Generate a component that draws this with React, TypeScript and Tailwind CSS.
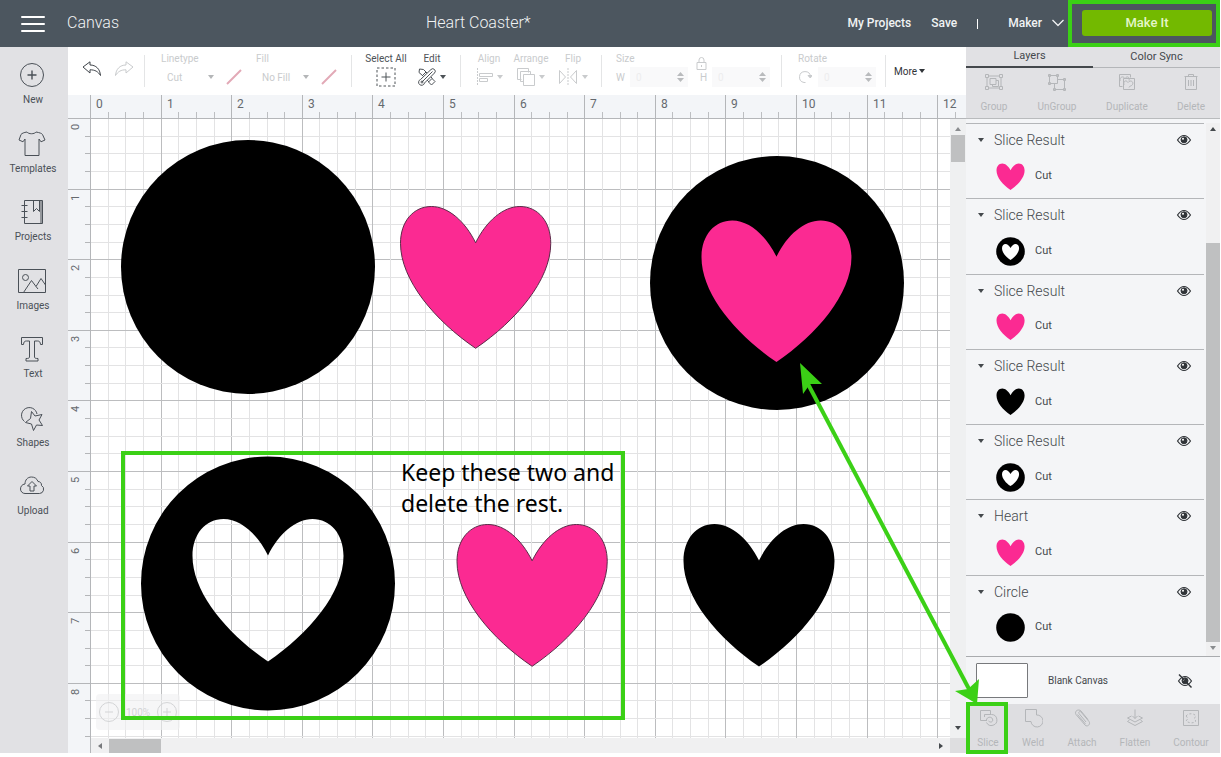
import type { ReactNode } from "react";

const UNIT = 70.6;
const HEART =
  "M75.5 36.5C65 15 48 0 31 0C13 0 0 15 0 37C0 74 35 115 75.5 142.5C116 115 151 74 151 37C151 15 138 0 120 0C103 0 86 15 75.5 36.5Z";
const PINK = "#fb2a92";

type IconProps = { className?: string; w?: number; h?: number; children: ReactNode };

function Icon({ className = "", w = 24, h = 24, children }: IconProps) {
  return (
    <svg
      width={w}
      height={h}
      viewBox={`0 0 ${w} ${h}`}
      fill="none"
      stroke="currentColor"
      strokeWidth="1"
      strokeLinejoin="round"
      className={`shrink-0 ${className}`}
      aria-hidden="true"
    >
      {children}
    </svg>
  );
}

function Caret({ className = "" }: { className?: string }) {
  return (
    <svg width="6" height="4" viewBox="0 0 6 4" className={`shrink-0 ${className}`} aria-hidden="true">
      <path d="M0 0h6L3 4z" fill="currentColor" />
    </svg>
  );
}

const tools = [
  {
    name: "New",
    icon: (
      <Icon w={28} h={28}>
        <circle cx="14" cy="14" r="11.5" />
        <path d="M14 9.5v9M9.5 14h9" strokeWidth="1.4" />
      </Icon>
    ),
  },
  {
    name: "Templates",
    icon: (
      <Icon w={28} h={28}>
        <path d="M9 2c1.5 2.3 7.5 2.3 9 0c3.500.6 6 1.500 6.500 2.500l2.500 5.500l-4 1.800l-2-2.800v16.500H7V9l-2 2.800l-4-1.800L3 4.500C3.800 3.300 6 2.500 9 2z" />
      </Icon>
    ),
  },
  {
    name: "Projects",
    icon: (
      <Icon w={28} h={28}>
        <path d="M6.500 2.500h18v23h-18zM15.500 2.500v11l3-3l3 3v-11M23 2.500v23M3.500 7.500h6M3.500 13.500h6M3.500 19.500h6" />
      </Icon>
    ),
  },
  {
    name: "Images",
    icon: (
      <Icon w={28} h={28}>
        <path d="M.5 2.500h27v23H.5zM5.500 25.500l8-12l4.500 6l5-8l4.500 6.500M18 19.500l2 2.500" />
        <circle cx="7.500" cy="10.500" r="3" />
      </Icon>
    ),
  },
  {
    name: "Text",
    icon: (
      <Icon w={28} h={28}>
        <path d="M3.500 2.500h21v7h-2c-.2-2.500-1-3.500-3-3.500h-3v16c0 1 .8 1.500 3.500 1.500v2.500h-12v-2.500c2.700 0 3.500-.5 3.500-1.500V6h-3c-2 0-2.800 1-3 3.500h-2z" />
      </Icon>
    ),
  },
  {
    name: "Shapes",
    icon: (
      <Icon w={28} h={28}>
        <path d="M6.500 17.500a7.800 7.800 0 1 1 12.500-7.500" />
        <path d="M13.500 7.500l3.500 4.500l7-1.500l-3 5.500l3.500 5.500l-6-.5l-3 5.500l-2-6.500l-6-1.500l5-4z" />
      </Icon>
    ),
  },
  {
    name: "Upload",
    icon: (
      <Icon w={28} h={28}>
        <path d="M7 21.500h14.500a4.300 4.300 0 0 0 2-8c.3-2.500-1.500-4-3.500-4C19 6.500 16.500 5 13.500 5C9.500 5 7 8 7 12c-3 .3-4.500 2.500-4.500 5s2 4.500 4.500 4.500z" />
        <path d="M14 9.500l-4.500 4.500H12v5h4v-5h2.500z" />
      </Icon>
    ),
  },
];

function Header() {
  return (
    <header className="flex h-[47px] shrink-0 items-center bg-[#4c565f] text-[#f1f3f4]">
      <button type="button" aria-label="Menu" className="ml-[21px] flex h-6 w-6 flex-col justify-between py-1">
        <span className="h-0.5 rounded-full bg-white" />
        <span className="h-0.5 rounded-full bg-white" />
        <span className="h-0.5 rounded-full bg-white" />
      </button>
      <h1 className="ml-[22px] w-[359px] shrink-0 pb-0.5 text-base font-light">Canvas</h1>
      <p className="flex-1 pb-0.5 text-base font-light">Heart Coaster*</p>
      <a href="#projects" className="mr-5 pb-0.5 text-xs font-medium">My Projects</a>
      <button type="button" className="mr-5 pb-0.5 text-xs font-medium">Save</button>
      <span className="mr-[30px] h-2.5 w-px bg-white" />
      <button type="button" className="mr-1 flex items-center gap-2.5 pb-0.5 text-xs font-medium">
        Maker
        <Icon w={12} h={8}>
          <path d="M.5 1l5.500 5.500L11.500 1" strokeWidth="1.300" />
        </Icon>
      </button>
      <div className="flex h-full w-[152px] items-center justify-end border-4 border-[#3bd016] pr-1">
        <button type="button" className="mb-0.5 h-[26px] w-[130px] rounded-[3px] bg-[#73b900] text-[13px] font-medium text-[#e4f6c9]">
          Make It
        </button>
      </div>
    </header>
  );
}

function Sidebar() {
  return (
    <nav className="flex w-[68px] shrink-0 flex-col bg-[#e1e1e4] pb-[226px] text-[#4a5057]">
      {tools.map((t) => (
        <button key={t.name} type="button" className="flex flex-1 flex-col items-center gap-1 pt-3.5 pr-1">
          {t.icon}
          <span className="pl-0.5 text-[10px] leading-3.5">{t.name}</span>
        </button>
      ))}
    </nav>
  );
}

function Divider() {
  return <span className="h-8 w-px shrink-0 bg-[#e4e5e6]" />;
}

function Slash() {
  return (
    <Icon w={16} h={16} className="text-[#e2a9b6]">
      <path d="M1 15L15 1" strokeWidth="2" />
    </Icon>
  );
}

function PickBox({ id, label, value }: { id: string; label: string; value: string }) {
  return (
    <div className="w-[95px] shrink-0">
      <label htmlFor={id} className="block text-[10px] leading-3">{label}</label>
      <div className="flex h-6 items-center">
        <select id={id} className="w-[43px] appearance-none bg-transparent pl-1.5 text-[10px] outline-none">
          <option>{value}</option>
        </select>
        <Caret className="ml-1 mr-3 text-[#b4b6b8]" />
        <Slash />
      </div>
    </div>
  );
}

function ToolButton({ label, className, children }: { label: string; className: string; children: ReactNode }) {
  return (
    <button type="button" className={`flex shrink-0 flex-col items-center ${className}`}>
      <span className="text-[10px] leading-3">{label}</span>
      <span className="flex h-6 items-center gap-1">{children}</span>
    </button>
  );
}

function NumberBox({ label }: { label: string }) {
  return (
    <span className="flex h-5 w-[58px] items-center justify-between bg-[#f9f9fa] pr-1">
      <input aria-label={label} defaultValue="0" className="w-8 bg-transparent pl-1.5 text-[10px] text-[#ededee] outline-none" />
      <svg width="7" height="10" viewBox="0 0 7 10" aria-hidden="true">
        <path d="M0 4L3.500 0L7 4zM0 6h7L3.500 10z" fill="#b9bbbd" />
      </svg>
    </span>
  );
}

function Toolbar() {
  return (
    <div className="flex h-12 shrink-0 items-center overflow-hidden bg-white text-[#c9cbcd]">
      <div className="flex w-[76px] shrink-0 gap-3 pb-1 pl-3.5">
        <button type="button" aria-label="Undo" className="text-[#3f444a]">
          <Icon w={20} h={16}>
            <path d="M1 6L8 .8V4c6 0 10 4 10.500 10.500C16 10.500 13 8.800 8 8.800V12z" />
          </Icon>
        </button>
        <button type="button" aria-label="Redo">
          <Icon w={20} h={16}>
            <path d="M19 6L12 .8V4C6 4 2 8 1.500 14.500C4 10.500 7 8.800 12 8.800V12z" />
          </Icon>
        </button>
      </div>
      <Divider />
      <div className="flex pl-4">
        <PickBox id="linetype" label="Linetype" value="Cut" />
        <PickBox id="fill" label="Fill" value="No Fill" />
      </div>
      <Divider />
      <ToolButton label="Select All" className="ml-3 w-11 text-[#4d5257]">
        <Icon w={20} h={20}>
          <path d="M1 1h18v18H1z" strokeDasharray="2.500 2" />
          <path d="M10 5.500v9M5.500 10h9" />
        </Icon>
      </ToolButton>
      <ToolButton label="Edit" className="mr-3 ml-2 w-8 text-[#4d5257]">
        <Icon w={18} h={18}>
          <path d="M1.500 1l4 .5L8 4L4.500 7.500L1 4.500zM10.500 14L14 10.500L17 13.500L13.500 17z" />
          <path d="M4 7l7 7M8 4l6.500 6.500" />
          <path d="M13 1.500a2 2 0 0 1 3.500 3.500L6.500 15a3 3 0 1 1-4-3.500z" fill="white" />
          <path d="M4 14L14.500 3.500" />
          <circle cx="4" cy="14" r="1" />
        </Icon>
        <Caret />
      </ToolButton>
      <Divider />
      <ToolButton label="Align" className="ml-3 w-8">
        <Icon w={17} h={18}>
          <path d="M1.500 0v18" strokeDasharray="2 1" />
          <path d="M3.500 5.500h13v3h-13zM3.500 10.500h8v3h-8z" />
        </Icon>
        <Caret />
      </ToolButton>
      <ToolButton label="Arrange" className="ml-2 w-9">
        <Icon w={18} h={18}>
          <path d="M4.500 11.500h-4V.5h11v4M7 13.500H3.500v-10h10V7" />
          <path d="M6.500 6.500h11v11h-11z" />
        </Icon>
        <Caret />
      </ToolButton>
      <ToolButton label="Flip" className="mr-3 ml-2 w-8">
        <Icon w={20} h={18}>
          <path d="M1.500 2.500l6 6.500l-6 6.500zM18.500 2.500l-6 6.500l6 6.500z" />
          <path d="M10 0v18" strokeDasharray="2 1" />
        </Icon>
        <Caret />
      </ToolButton>
      <Divider />
      <div className="w-[179px] shrink-0 pl-3.5">
        <div className="flex h-3 items-center text-[10px] leading-3">
          <span className="w-20">Size</span>
          <button type="button" aria-label="Lock proportions" className="pt-2">
            <Icon w={11} h={13}>
              <path d="M1 5.500h9v7H1zM3 5.500V3a2.500 2.500 0 0 1 5 0v2.500M5.500 8v2" />
            </Icon>
          </button>
        </div>
        <div className="flex h-6 items-center text-[10px]">
          <span className="w-3.5">W</span>
          <NumberBox label="Width" />
          <span className="ml-3 w-3">H</span>
          <NumberBox label="Height" />
        </div>
      </div>
      <Divider />
      <div className="ml-4 w-[87px] shrink-0">
        <span className="block text-[10px] leading-3">Rotate</span>
        <div className="flex h-6 items-center gap-1.5">
          <Icon w={14} h={14}>
            <path d="M7.500 12.500H6a5.500 5.500 0 1 1 6.500-6" />
            <path d="M10 5.500h4L12.300 8z" fill="currentColor" />
          </Icon>
          <NumberBox label="Rotate" />
        </div>
      </div>
      <Divider />
      <button type="button" className="ml-2 flex items-center gap-0.5 text-[10px] text-[#303438]">
        More
        <Caret />
      </button>
    </div>
  );
}

const ticks = Array.from({ length: 60 }, (_, i) => i);

function TopRuler() {
  return (
    <svg className="block h-6 w-full bg-[#f3f5f8]" aria-hidden="true">
      {ticks.map((i) => (
        <path
          key={i}
          d={`M${Math.round((i * UNIT) / 4) + 22.5} ${i % 4 ? 17 : 0}V24`}
          stroke={i % 4 ? "#bcbec1" : "#b4b6b9"}
        />
      ))}
      {ticks.slice(0, 13).map((n) => (
        <text key={n} x={Math.round(n * UNIT) + 28} y="13" fontSize="12" fill="#65696e">
          {n}
        </text>
      ))}
      <path d="M0 23.500H3000" stroke="#b4b6b9" />
    </svg>
  );
}

function SideRuler() {
  return (
    <svg className="block w-[23px] shrink-0 bg-[#f3f5f8]" aria-hidden="true">
      {ticks.map((i) => (
        <path key={i} d={`M${i % 4 ? 17 : 0} ${Math.round((i * UNIT) / 4) - 0.5}H23`} stroke="#b4b6b9" />
      ))}
      {ticks.slice(0, 9).map((n) => (
        <text
          key={n}
          transform={`translate(11 ${Math.round(n * UNIT) + 11}) rotate(-90)`}
          fontSize="11"
          fill="#65696e"
        >
          {n}
        </text>
      ))}
      <path d="M22.500 0V2000" stroke="#b4b6b9" />
    </svg>
  );
}

function Artboard() {
  return (
    <svg className="block h-full w-full bg-white" role="img" aria-label="Heart coaster design">
      {ticks.map((i) => {
        const p = Math.round((i * UNIT) / 4) - 0.5;
        return <path key={i} d={`M${p} 0V2000M0 ${p}H3000`} stroke={i % 4 ? "#e3e3e4" : "#bcbdbf"} />;
      })}
      <circle cx="157" cy="148" r="127" />
      <path d={HEART} transform="translate(309.500 87.500) scale(.995)" fill={PINK} stroke="#5a2a48" />
      <circle cx="686" cy="164" r="127" />
      <path d={HEART} transform="translate(610.500 101.500) scale(.993)" fill={PINK} />
      {/* coaster ring with the heart cut out of it */}
      <path
        d={`M-51.500 64.500a127 127 0 1 0 254 0a127 127 0 1 0 -254 0Z${HEART}`}
        fillRule="evenodd"
        transform="translate(101.500 400)"
      />
      <path d={HEART} transform="translate(366 405.500) scale(.995)" fill={PINK} stroke="#5a2a48" />
      <path d={HEART} transform="translate(592.500 405)" />
    </svg>
  );
}

function Workspace() {
  return (
    <main className="flex min-w-0 flex-1 flex-col">
      <Toolbar />
      <TopRuler />
      <div className="flex min-h-0 flex-1">
        <SideRuler />
        <div className="flex min-w-0 flex-1 flex-col">
          <div className="flex min-h-0 flex-1">
            <div className="relative min-w-0 flex-1 overflow-hidden">
              <Artboard />
              <div className="absolute bottom-2 left-[5px] flex h-9 w-[84px] items-center justify-between rounded-sm bg-[#f0f0f1]/60 px-[3px] text-[10px] text-[#d3d4d6]">
                <button type="button" aria-label="Zoom out">
                  <Icon w={20} h={20}>
                    <circle cx="10" cy="10" r="9.500" />
                    <path d="M6 10h8" />
                  </Icon>
                </button>
                <span>100%</span>
                <button type="button" aria-label="Zoom in">
                  <Icon w={20} h={20}>
                    <circle cx="10" cy="10" r="9.500" />
                    <path d="M6 10h8M10 6v8" />
                  </Icon>
                </button>
              </div>
              <p className="absolute top-[332px] left-[30px] h-[269px] w-[504px] border-4 border-[#3bd016] pt-0.5 pl-[276px] font-['Noto_Sans',sans-serif] text-[23px] leading-[31px] whitespace-nowrap text-black">
                Keep these two and
                <br />
                delete the rest.
              </p>
            </div>
            <div className="flex w-4 flex-col items-center bg-[#eff0f1] pt-2 pb-2 text-[#8a8c8f]">
              <Caret className="rotate-180" />
              <span className="mt-1 h-[27px] w-3.5 bg-[#bfc0c1]" />
              <Caret className="mt-auto text-[#44484c]" />
            </div>
          </div>
          <div className="flex h-[15px] shrink-0 items-center bg-[#f0f0f1]">
            <Caret className="ml-1.5 rotate-90 text-[#77797c]" />
            <span className="ml-1.5 h-3.5 w-[52px] bg-[#bfc0c1]" />
            <Caret className="mr-1.5 ml-auto -rotate-90 text-[#44484c]" />
            <span className="h-full w-4 bg-[#dedee0]" />
          </div>
        </div>
      </div>
    </main>
  );
}

type Thumb = "pink" | "black" | "ring" | "circle";

const layers: { name: string; thumb: Thumb }[] = [
  { name: "Slice Result", thumb: "pink" },
  { name: "Slice Result", thumb: "ring" },
  { name: "Slice Result", thumb: "pink" },
  { name: "Slice Result", thumb: "black" },
  { name: "Slice Result", thumb: "ring" },
  { name: "Heart", thumb: "pink" },
  { name: "Circle", thumb: "circle" },
];

function LayerThumb({ thumb }: { thumb: Thumb }) {
  const round = thumb === "ring" || thumb === "circle";
  return (
    <svg width="29" height="29" viewBox="0 0 29 29" aria-hidden="true">
      {round && <circle cx="14.500" cy="14.500" r="14.300" />}
      {thumb === "ring" && <path d={HEART} fill="white" transform="translate(6 7) scale(.113)" />}
      {!round && (
        <path d={HEART} fill={thumb === "pink" ? PINK : "black"} transform="translate(.5 1.500) scale(.186)" />
      )}
    </svg>
  );
}

function Eye({ off = false }: { off?: boolean }) {
  return (
    <Icon w={16} h={14} className="text-[#303438]">
      <path d="M1.500 7C4 3.300 6 2.500 8 2.500S12 3.300 14.500 7C12 10.700 10 11.500 8 11.500S4 10.700 1.500 7z" strokeWidth="1.200" />
      <circle cx="8" cy="6.800" r="3" fill="currentColor" />
      <circle cx="7" cy="5.700" r="1" fill="white" stroke="none" />
      {off && <path d="M2 .5L14.500 13.500" strokeWidth="1.400" />}
    </Icon>
  );
}

function PanelButton({ label, className, children }: { label: string; className: string; children: ReactNode }) {
  return (
    <button type="button" className={`flex shrink-0 flex-col items-center text-[10px] leading-3.5 ${className}`}>
      <Icon w={20} h={20}>{children}</Icon>
      {label}
    </button>
  );
}

function LayersPanel() {
  return (
    <aside className="flex w-[254px] shrink-0 flex-col bg-[#f4f5f7] text-[#44484c]">
      <div className="flex h-[21px] shrink-0 bg-[#e1e1e4] text-[11px]">
        <button type="button" className="flex-1 border-b-2 border-[#44484c]">Layers</button>
        <button type="button" className="flex-1 border-b border-[#b4b6b9]">Color Sync</button>
      </div>
      <div className="flex h-[51px] shrink-0 items-start border-b border-[#b9bbbd] bg-[#e1e1e4] pt-1 text-[#b4b6b9]">
        <PanelButton label="Group" className="w-14 gap-2">
          <path d="M1.500 2.500h3v3h-3zM15.500 2.500h3v3h-3zM1.500 14.500h3v3h-3zM15.500 14.500h3v3h-3zM4.500 4h11M4.500 16h11M3 5.500v9M17 5.500v9M6 6.500h6v6H6z" />
          <path d="M8.500 12.500v2h6v-6H12" />
        </PanelButton>
        <PanelButton label="UnGroup" className="w-[70px] gap-2">
          <path d="M2.500 3.500h8v8h-8zM1.500 2.500h2v2h-2zM9.500 2.500h2v2h-2zM1.500 10.500h2v2h-2z" />
          <path d="M7.500 11.500v6h10v-10h-7M6.500 16.500h2v2h-2zM16.500 16.500h2v2h-2zM16.500 6.500h2v2h-2z" />
        </PanelButton>
        <PanelButton label="Duplicate" className="w-[70px] gap-2">
          <path d="M5.500 14.500h-3v-12h11v3M6.500 6.500h11v11h-11z" />
          <path d="M3 9c-.5-4 3-5.500 5-2.500c2-3 5-1.500 4 2M7 13c-1-4 2-5.500 4-2.500c2-3 6-1 4.500 2c-1 2-3 1-3.500 3" />
        </PanelButton>
        <PanelButton label="Delete" className="w-[58px] gap-2">
          <path d="M3.500 4.500h13M7.500 4.500v-2h5v2M4.500 4.500v13h11v-13M7.500 8v6M10 8v6M12.500 8v6" />
        </PanelButton>
      </div>
      <div className="mt-1 flex min-h-0 flex-1">
        <ul className="flex min-w-0 flex-1 flex-col pb-1.5">
          {layers.map((l, i) => (
            <li key={i} className="flex-1 border-t border-[#b4b6b9] pr-3 pl-3">
              <div className="flex h-8 items-center">
                <Caret />
                <h2 className="ml-2.5 flex-1 text-sm font-light">{l.name}</h2>
                <button type="button" aria-label="Hide layer">
                  <Eye />
                </button>
              </div>
              <div className="flex h-10 items-center gap-2.5 pl-[18px] text-[11px]">
                <LayerThumb thumb={l.thumb} />
                Cut
              </div>
            </li>
          ))}
        </ul>
        <div className="ml-0.5 flex w-3.5 flex-col items-center bg-[#f0f0f1] pt-1 pb-1.5">
          <Caret className="rotate-180" />
          <span className="mt-28 w-full flex-1 bg-[#bfc0c1]" />
          <Caret className="mt-1 text-[#8a8c8f]" />
        </div>
      </div>
      <div className="flex h-12 shrink-0 items-center border-t border-[#a9abae] pr-[27px] pl-2.5 text-[10px]">
        <span className="h-[35px] w-[52px] rounded-[1px] border border-[#77797c] bg-white" />
        <span className="ml-5 flex-1">Blank Canvas</span>
        <button type="button" aria-label="Show canvas">
          <Eye off />
        </button>
      </div>
      <div className="relative flex h-[49px] shrink-0 items-start bg-[#dedee1] pt-1 text-[#b4b6b9]">
        <PanelButton label="Slice" className="w-11 gap-2">
          <path d="M9 12.500H2.500v-10h10V6" />
          <path d="M6.500 9V6.500h7a5.500 5.500 0 1 1-5 8M8.500 12c0-3 5-4 6-1s-2 4-4 2" />
        </PanelButton>
        <PanelButton label="Weld" className="w-[46px] gap-2">
          <path d="M8 13.500H2.500v-12h11V7a6 6 0 1 1-5.500 6.500z" />
        </PanelButton>
        <PanelButton label="Attach" className="w-[52px] gap-2">
          <path d="M14 14L7 5.500c-1-1.300 1-2.800 2-1.500l8 9.500c2 3-2 6-4 3.500L4 6.500C2 3 6.500.5 9 3l7 8.500M5.500 6.500l8 9.500" />
        </PanelButton>
        <PanelButton label="Flatten" className="w-[54px] gap-2">
          <path d="M10 1.500v9M7.500 8l2.500 2.500L12.500 8M6.500 8l-4 2l7.500 4l7.500-4l-4-2M4.500 12l-2 1.500l7.500 4l7.500-4l-2-1.500" />
        </PanelButton>
        <PanelButton label="Contour" className="w-[58px] gap-2">
          <path d="M2.500 2.500h15v15h-15z" />
          <path d="M5 8c2-3 8-3 10 0c-2 2-2 4 0 5c-3 3-7 2-10 0c2-2 2-3 0-5z" strokeDasharray="2 2" />
        </PanelButton>
        <span className="absolute -top-0.5 left-0 h-[52px] w-[42px] border-4 border-[#3bd016]" />
      </div>
    </aside>
  );
}

export default function App() {
  return (
    <div className="relative flex h-screen flex-col overflow-hidden bg-white pr-px pb-1 font-[Roboto,sans-serif]">
      <Header />
      <div className="flex min-h-0 flex-1">
        <Sidebar />
        <Workspace />
        <LayersPanel />
      </div>
      {/* arrow between the joined shape and the Slice button */}
      <svg
        width="201"
        height="350"
        viewBox="0 0 201 350"
        fill="#3bd016"
        className="pointer-events-none absolute right-[230px] bottom-[47px]"
        aria-hidden="true"
      >
        <path d="M18 24L179 329" stroke="#3bd016" strokeWidth="4" />
        <path d="M10 3L32 24L20 24L13 34zM187 344L165 331L178 329L189 319z" />
      </svg>
    </div>
  );
}
